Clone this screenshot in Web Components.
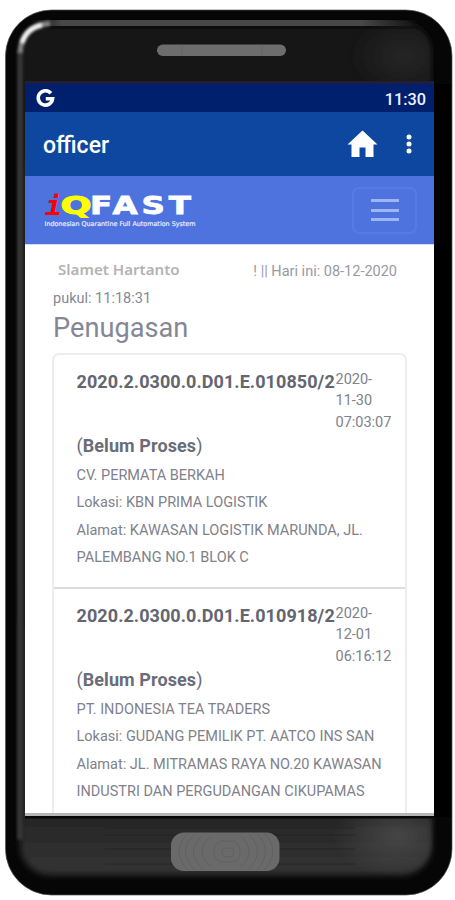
<!DOCTYPE html>
<html lang="id">
<head>
<meta charset="utf-8">
<title>officer</title>
<style>
    body {
        margin: 0;
        background: #fff;
        font-family: Roboto, "Liberation Sans", sans-serif;
    }
</style>
</head>
<body>
<phone-frame>
    <status-bar data-time="11:30"></status-bar>
    <app-bar>officer</app-bar>
    <brand-nav></brand-nav>
    <task-page data-user="Slamet Hartanto" data-day="! || Hari ini: 08-12-2020" data-clock="pukul: 11:18:31">
        <span slot="title">Penugasan</span>
        <task-item data-number="2020.2.0300.0.D01.E.010850/2" data-date="2020-|11-30|07:03:07" data-status="Belum Proses">
            <div>CV. PERMATA BERKAH</div>
            <div>Lokasi: KBN PRIMA LOGISTIK</div>
            <div>Alamat: KAWASAN LOGISTIK MARUNDA, JL.</div>
            <div>PALEMBANG NO.1 BLOK C</div>
        </task-item>
        <task-item data-number="2020.2.0300.0.D01.E.010918/2" data-date="2020-|12-01|06:16:12" data-status="Belum Proses">
            <div>PT. INDONESIA TEA TRADERS</div>
            <div>Lokasi: GUDANG PEMILIK PT. AATCO INS SAN</div>
            <div>Alamat: JL. MITRAMAS RAYA NO.20 KAWASAN</div>
            <div>INDUSTRI DAN PERGUDANGAN CIKUPAMAS</div>
        </task-item>
    </task-page>
</phone-frame>

<script>
class PhoneFrame extends HTMLElement {
    constructor() {
        super();
        this.attachShadow({ mode: 'open' });
        this.shadowRoot.innerHTML = `
            <style>
                :host {
                    display: block;
                    position: relative;
                    box-sizing: border-box;
                    width: 455px;
                    height: 900px;
                    padding: 81px 21px 0 25px;
                    overflow: hidden;
                }
                .shell {
                    position: absolute;
                    left: 0;
                    top: 0;
                }
                .screen {
                    position: relative;
                    display: flex;
                    flex-direction: column;
                    height: 735px;
                    box-sizing: border-box;
                    background: #fff;
                    border-top: 3px solid #201e38;
                    border-bottom: 3px solid #b5b7b6;
                    overflow: hidden;
                }
            </style>
            <svg class="shell" width="455" height="900" viewBox="0 0 455 900">
                <defs>
                    <linearGradient id="body" x1="0" y1="0" x2="0" y2="1">
                        <stop offset="0" stop-color="#111"/>
                        <stop offset=".1" stop-color="#191919"/>
                        <stop offset=".91" stop-color="#222"/>
                        <stop offset="1" stop-color="#343434"/>
                    </linearGradient>
                    <linearGradient id="rim" x1="0" y1="0" x2="1" y2="0">
                        <stop offset="0" stop-color="#484848" stop-opacity="0"/>
                        <stop offset=".08" stop-color="#484848"/>
                        <stop offset=".85" stop-color="#484848"/>
                        <stop offset="1" stop-color="#484848" stop-opacity="0"/>
                    </linearGradient>
                    <radialGradient id="glow">
                        <stop offset="0" stop-color="#555"/>
                        <stop offset="1" stop-color="#555" stop-opacity="0"/>
                    </radialGradient>
                    <filter id="soft" x="-30%" y="-30%" width="160%" height="160%"><feGaussianBlur stdDeviation="1.700"/></filter>
                    <filter id="edge" x="-10%" y="-10%" width="120%" height="120%"><feGaussianBlur stdDeviation="3"/></filter>
                    <clipPath id="outline"><rect x="5.500" y="10" width="446.500" height="885" rx="46"/></clipPath>
                    <clipPath id="face"><rect x="20" y="24" width="412" height="850" rx="30"/></clipPath>
                </defs>
                <g clip-path="url(#outline)">
                    <rect x="5" y="10" width="448" height="886" fill="#060606"/>
                    <rect x="20" y="21" width="412" height="854" rx="30" fill="url(#body)" filter="url(#edge)"/>
                    <g filter="url(#soft)">
                        <g clip-path="url(#face)">
                            <ellipse cx="398" cy="836" rx="66" ry="42" fill="url(#glow)" opacity=".65"/>
                            <ellipse cx="404" cy="56" rx="55" ry="40" fill="url(#glow)" opacity=".25"/>
                        </g>
                        <rect x="17" y="50" width="6" height="790" rx="3" fill="#363636"/>
                    </g>
                    <rect x="30" y="20" width="390" height="6" fill="url(#rim)"/>
                    <path d="M20 53C21 34 32 25 50 23.500" fill="none" stroke="#888" stroke-width="5" filter="url(#soft)"/>
                    <path d="M22 43C25 33 32 27 42 25" fill="none" stroke="#fff" stroke-width="4" filter="url(#soft)"/>
                    <rect x="434" y="84" width="18" height="733" fill="#000"/>
                    <path d="M25 817H434" stroke="#080808" stroke-width="3"/>
                    <path d="M105 828H355M105 835H355M105 849H355M105 864H355" stroke="#1f1f1f" opacity=".6"/>
                </g>
                <rect x="5.500" y="10" width="446.500" height="885" rx="46" fill="none" stroke="#555" stroke-width=".7"/>
                <rect x="157" y="44.500" width="129" height="11.500" rx="5.700" fill="#6d6d6d"/>
                <path d="M182 45v11M262 45v11" stroke="#656565"/>
                <rect x="171" y="832.500" width="108.500" height="38.500" rx="13" fill="#6a6a6a"/>
                <g fill="none" stroke="#616161">
                    <rect x="222" y="848" width="12" height="9" rx="4"/>
                    <rect x="214" y="841" width="26" height="21" rx="9"/>
                    <path d="M211 836Q193 851 211 867M203 835Q184 851 203 869M195 834Q176 851 195 870M188 833Q170 851 188 870"/>
                    <path d="M241 836Q257 851 241 867M249 835Q266 851 249 869M257 834Q274 851 257 870M264 833Q282 851 264 870"/>
                </g>
            </svg>
            <div class="screen"><slot></slot></div>
        `;
    }
}

class StatusBar extends HTMLElement {
    constructor() {
        super();
        this.attachShadow({ mode: 'open' });
        this.shadowRoot.innerHTML = `
            <style>
                :host {
                    display: flex;
                    flex: none;
                    align-items: center;
                    justify-content: space-between;
                    box-sizing: border-box;
                    height: 28px;
                    padding: 2px 8px 0 11px;
                    background: #00206e;
                    color: #eef2ff;
                    font-size: 16.300px;
                    font-weight: 500;
                }
                svg { display: block; margin-bottom: 1px; }
            </style>
            <svg width="19" height="19" viewBox="0 0 19 19" fill="none" stroke="#fff" stroke-width="3.600">
                <path d="M14.900 4.200A7.200 7.200 0 1 0 16.600 9.800H9.800"/>
            </svg>
            <span>${this.getAttribute('data-time')}</span>
        `;
    }
}

class AppBar extends HTMLElement {
    constructor() {
        super();
        this.attachShadow({ mode: 'open' });
        this.shadowRoot.innerHTML = `
            <style>
                :host {
                    display: flex;
                    flex: none;
                    align-items: center;
                    box-sizing: border-box;
                    height: 64px;
                    padding: 0 22px 0 18px;
                    background: #0e479f;
                    color: #fff;
                    font-size: 23px;
                    font-weight: 500;
                }
                .title { flex: 1; padding-top: 2px; }
                .home { margin-right: 28px; }
            </style>
            <span class="title"><slot></slot></span>
            <svg class="home" width="31" height="28" viewBox="0 0 31 28" fill="#fff">
                <path d="M15.500 0.500L30.500 14.500H26.500V27H18.500V17.500H12.500V27H4.500V14.500H.5z"/>
            </svg>
            <svg width="6" height="20" viewBox="0 0 6 20" fill="#fff">
                <circle cx="3" cy="3" r="2.500"/>
                <circle cx="3" cy="10" r="2.500"/>
                <circle cx="3" cy="17" r="2.500"/>
            </svg>
        `;
    }
}

class BrandNav extends HTMLElement {
    constructor() {
        super();
        this.attachShadow({ mode: 'open' });
        this.shadowRoot.innerHTML = `
            <style>
                :host {
                    display: flex;
                    flex: none;
                    align-items: center;
                    justify-content: space-between;
                    box-sizing: border-box;
                    height: 69px;
                    padding: 0 17px 0 19px;
                    background: #4e73df;
                    border-bottom: 1px solid #cfdcff;
                }
                .logo { font-family: "DejaVu Sans", sans-serif; font-weight: 700; }
                .toggle {
                    display: flex;
                    flex-direction: column;
                    align-items: center;
                    justify-content: center;
                    gap: 6.500px;
                    width: 65px;
                    height: 47px;
                    box-sizing: border-box;
                    border: 2px solid #587be3;
                    border-radius: 7px;
                }
                .toggle i {
                    width: 28px;
                    height: 3px;
                    background: #9eb5f3;
                }
            </style>
            <svg class="logo" width="156" height="40" viewBox="0 0 156 40">
                <text x="1" y="25" font-family="DejaVu Sans Mono" font-size="26" font-style="italic" fill="#f00" textLength="17" lengthAdjust="spacingAndGlyphs">i</text>
                <text x="16.500" y="23.500" font-size="24" fill="#ff0" stroke="#ff0" textLength="31" lengthAdjust="spacingAndGlyphs">Q</text>
                <text x="46" y="23.500" font-size="24.500" fill="#fff" stroke="#fff" stroke-width=".8" textLength="105" lengthAdjust="spacingAndGlyphs" letter-spacing="3">FAST</text>
                <text x=".5" y="36" font-size="6.500" font-weight="400" fill="#e4ebff" stroke="#e4ebff" stroke-width=".2" textLength="151" lengthAdjust="spacingAndGlyphs">Indonesian Quarantine Full Automation System</text>
            </svg>
            <div class="toggle"><i></i><i></i><i></i></div>
        `;
    }
}

class TaskPage extends HTMLElement {
    constructor() {
        super();
        this.attachShadow({ mode: 'open' });
        this.shadowRoot.innerHTML = `
            <style>
                :host {
                    display: block;
                    padding: 13px 27px 0 27px;
                    color: #858796;
                }
                .top {
                    display: flex;
                    justify-content: space-between;
                    height: 27px;
                    padding: 0 10px 0 6px;
                    line-height: 28px;
                    white-space: nowrap;
                }
                .user {
                    font: 600 15.100px/23px "Noto Sans", sans-serif;
                    color: #b3b3b5;
                }
                .day { color: #9799a3; font-size: 14.500px; }
                .clock { font-size: 14.500px; line-height: 28px; padding-left: 1px; }
                h1 {
                    margin: 0 0 9px 1px;
                    font-size: 27.200px;
                    font-weight: 400;
                    line-height: 31px;
                }
                .card {
                    border: 2px solid #ededef;
                    border-radius: 7px;
                    height: 520px;
                }
            </style>
            <div class="top">
                <span class="user">${this.getAttribute('data-user')}</span>
                <span class="day">${this.getAttribute('data-day')}</span>
            </div>
            <div class="clock">${this.getAttribute('data-clock')}</div>
            <h1><slot name="title"></slot></h1>
            <div class="card"><slot></slot></div>
        `;
    }
}

class TaskItem extends HTMLElement {
    constructor() {
        super();
        this.attachShadow({ mode: 'open' });
        const lines = this.getAttribute('data-date').split('|').map(part => `<div>${part}</div>`).join('');
        this.shadowRoot.innerHTML = `
            <style>
                :host {
                    display: block;
                    box-sizing: border-box;
                    height: 234px;
                    padding: 13px 0 0 22.500px;
                    border-bottom: 2px solid #dcdddf;
                    font-size: 14.500px;
                    line-height: 27.400px;
                    white-space: nowrap;
                    color: #7f818b;
                }
                .head {
                    display: flex;
                    height: 64px;
                }
                .number {
                    flex: none;
                    width: 259px;
                    font-size: 18px;
                    font-weight: 700;
                    letter-spacing: .08px;
                    line-height: 28px;
                    color: #636571;
                }
                .date { line-height: 21.300px; padding-top: 1px; }
                .status {
                    font-size: 18px;
                    letter-spacing: .08px;
                    line-height: 28px;
                    margin-bottom: 2px;
                    color: #6a6c77;
                }
            </style>
            <div class="head">
                <div class="number">${this.getAttribute('data-number')}</div>
                <div class="date">${lines}</div>
            </div>
            <div class="status">(<b>${this.getAttribute('data-status')}</b>)</div>
            <slot></slot>
        `;
    }
}

customElements.define('phone-frame', PhoneFrame);
customElements.define('status-bar', StatusBar);
customElements.define('app-bar', AppBar);
customElements.define('brand-nav', BrandNav);
customElements.define('task-page', TaskPage);
customElements.define('task-item', TaskItem);
</script>
</body>
</html>
